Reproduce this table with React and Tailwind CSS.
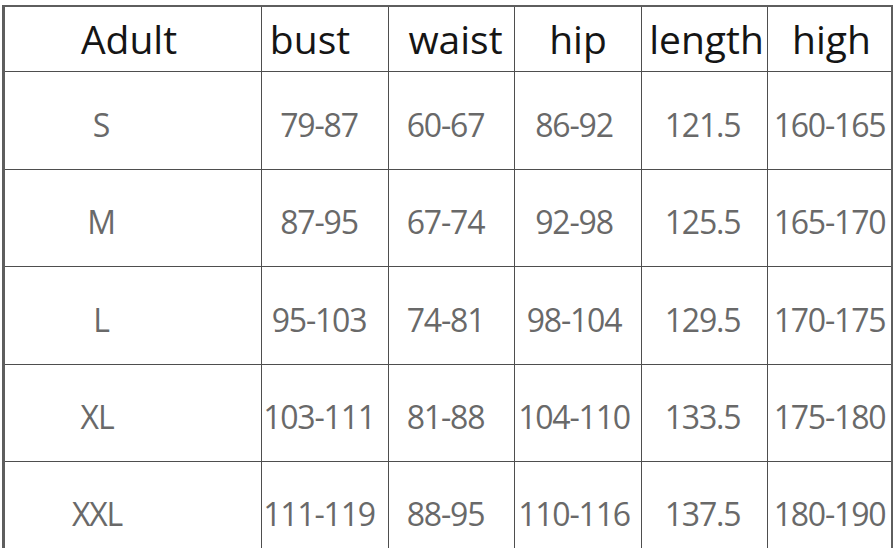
const headers = [
  { label: "Adult", cls: "pr-2" },
  { label: "bust", cls: "pr-[30px]" },
  { label: "waist", cls: "pl-2" },
  { label: "hip", cls: "" },
  { label: "length", cls: "pl-1" },
  { label: "high", cls: "pl-1" },
];

const rows = [
  ["S", "79-87", "60-67", "86-92", "121.5", "160-165"],
  ["M", "87-95", "67-74", "92-98", "125.5", "165-170"],
  ["L", "95-103", "74-81", "98-104", "129.5", "170-175"],
  ["XL", "103-111", "81-88", "104-110", "133.5", "175-180"],
  ["XXL", "111-119", "88-95", "110-116", "137.5", "180-190"],
];

// horizontal nudges per column, the source image is not perfectly centred
const colShift = ["", "pr-3", "pr-3", "pr-2", "pr-1", ""];
const sizeShift = ["pr-16", "pr-16", "pr-16", "pr-[72px]", "pr-[72px]"];
const rowHeights = ["h-[98px]", "h-[97px]", "h-[98px]", "h-[97px]", "h-[97px]"];

const App = () => {
  return (
    <div className="h-[548px] w-[896px] overflow-hidden bg-white">
      <div
        className="ml-[2px] mt-[5px] w-[891px] border-l-[3px] border-t-2 border-r-2 border-[#5e5e5e]"
        style={{ fontFamily: '"Open Sans", "Noto Sans", sans-serif' }}
      >
        <div className="grid grid-cols-[257px_127px_126px_127px_126px_123px]">
          {headers.map((h, i) => (
            <div
              key={h.label}
              className={`flex h-[65px] items-center justify-center border-b border-[#4e4e4e] pb-[2px] text-[39px] leading-none text-[#151515] ${
                i < 5 ? "border-r" : ""
              } ${h.cls}`}
            >
              {h.label}
            </div>
          ))}
          {rows.map((row, r) =>
            row.map((cell, c) => (
              <div
                key={r + "-" + c}
                className={`flex items-center justify-center overflow-visible whitespace-nowrap border-b border-[#4e4e4e] pt-2 text-[32px] font-medium leading-none tracking-[-1.2px] text-[#696969] ${
                  rowHeights[r]
                } ${c < 5 ? "border-r" : ""} ${c === 0 ? sizeShift[r] : colShift[c]}`}
              >
                {cell}
              </div>
            ))
          )}
        </div>
      </div>
    </div>
  );
};

export default App;
